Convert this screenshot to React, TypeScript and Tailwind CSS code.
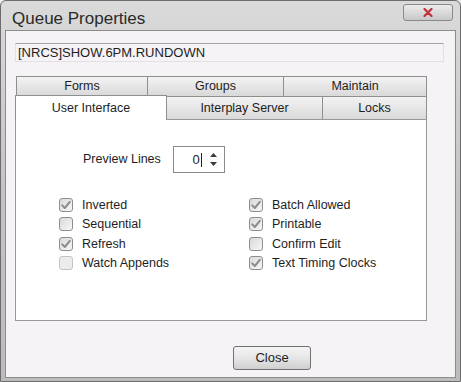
import React from 'react';

const Check: React.FC<{ checked?: boolean; disabled?: boolean; label: string }> = ({ checked, disabled, label }) => (
  <div className="h-[19.5px] flex items-center">
    <div
      className={`w-[14px] h-[14px] rounded-[3px] border flex items-center justify-center ${
        disabled ? 'border-[#c4c4c4] bg-[#ececec]' : 'border-[#8e8e8e] bg-gradient-to-br from-[#d9d9d9] to-[#f7f7f7]'
      }`}
    >
      {checked && (
        <svg width="12" height="12" viewBox="0 0 12 12">
          <path d="M2.2 6.4 L4.8 9 L9.8 2.8" fill="none" stroke="#8c8c8c" strokeWidth="2" strokeLinecap="round" strokeLinejoin="round" />
        </svg>
      )}
    </div>
    <span className="ml-[9px] text-[12.5px] text-[#1e1e1e] leading-none">{label}</span>
  </div>
);

const tabBack = 'h-[20px] border border-[#8f8f8f] border-b-0 -ml-px first:ml-0 bg-gradient-to-b from-[#f3f3f3] to-[#d9d9d9] flex items-center justify-center text-[12.5px] text-[#1e1e1e]';
const tabFront = 'h-[23px] border border-[#8f8f8f] border-b-0 -ml-px bg-gradient-to-b from-[#f3f3f3] to-[#d9d9d9] flex items-center justify-center text-[12.5px] text-[#1e1e1e]';

export default function App() {
  return (
    <div className="w-[461px] h-[382px] bg-[#ececec] font-['Liberation_Sans',Arial,sans-serif]">
      <div className="w-full h-full rounded-t-[6px] border border-[#6c6c6c] bg-gradient-to-b from-[#dadada] via-[#c4c4c4] to-[#bcbcbc] flex flex-col px-[4px] pb-[3px]">
        {/* title bar */}
        <div className="h-[29px] flex items-start justify-between shrink-0">
          <span className="mt-[5px] ml-[7px] text-[17px] text-[#2a2a2a]">Queue Properties</span>
          <div className="mt-[3px] mr-[3px] w-[50px] h-[17px] rounded-[3px] border border-[#8a8a8a] bg-gradient-to-b from-[#ececec] to-[#c8c8c8] flex items-center justify-center">
            <svg width="10" height="9" viewBox="0 0 10 9">
              <path d="M1.5 1 L8.5 8 M8.5 1 L1.5 8" stroke="#c0323a" strokeWidth="2.2" strokeLinecap="round" />
            </svg>
          </div>
        </div>

        {/* client area */}
        <div className="flex-1 bg-[#f6f3f6] border border-[#8c8c8c] flex flex-col">
          <div className="ml-[9px] mt-[12px] w-[429px] h-[19px] border border-[#e3e0e3] border-t-[#a6a6a6] flex items-center pl-[2px] text-[13px] text-[#1e1e1e]">
            [NRCS]SHOW.6PM.RUNDOWN
          </div>

          <div className="ml-[9px] mt-[14px] flex flex-col">
            <div className="flex ml-[1px]">
              <div className={`${tabBack} w-[132px]`}>Forms</div>
              <div className={`${tabBack} w-[137px]`}>Groups</div>
              <div className={`${tabBack} w-[144px]`}>Maintain</div>
            </div>
            <div className="flex items-end">
              <div className="relative z-10 h-[25px] w-[152px] -mt-[2px] -mb-px border border-[#8f8f8f] border-b-0 bg-white flex items-start justify-center pt-[3px] text-[12.5px] text-[#1e1e1e]">
                User Interface
              </div>
              <div className={`${tabFront} w-[157px]`}>Interplay Server</div>
              <div className={`${tabFront} w-[105px]`}>Locks</div>
            </div>
            <div className="w-[412px] h-[202px] border border-[#989898] bg-white flex flex-col">
              <div className="mt-[26px] ml-[67px] flex items-center">
                <span className="text-[12.5px] text-[#1e1e1e]">Preview Lines</span>
                <div className="ml-[12px] w-[52px] h-[27px] border border-[#8a8a8a] bg-white flex items-center">
                  <span className="ml-auto text-[13px] text-[#1e1e1e] leading-none">0</span>
                  <span className="w-px h-[14px] bg-[#1e1e1e] ml-[1px]" />
                  <div className="ml-[6px] mr-[4px] w-[12px] flex flex-col items-center gap-[5px]">
                    <svg width="7" height="4" viewBox="0 0 7 4"><path d="M0 4 L3.5 0 L7 4 Z" fill="#3a3a3a" /></svg>
                    <svg width="7" height="4" viewBox="0 0 7 4"><path d="M0 0 L3.5 4 L7 0 Z" fill="#3a3a3a" /></svg>
                  </div>
                </div>
              </div>

              <div className="mt-[22px] flex">
                <div className="ml-[43px] w-[190px] flex flex-col">
                  <Check checked label="Inverted" />
                  <Check label="Sequential" />
                  <Check checked label="Refresh" />
                  <Check disabled label="Watch Appends" />
                </div>
                <div className="flex flex-col">
                  <Check checked label="Batch Allowed" />
                  <Check checked label="Printable" />
                  <Check label="Confirm Edit" />
                  <Check checked label="Text Timing Clocks" />
                </div>
              </div>
            </div>
          </div>

          <div className="mt-[25px] ml-[227px] w-[78px] h-[24px] rounded-[3px] border border-[#707070] bg-gradient-to-b from-[#f4f4f4] via-[#e6e6e6] to-[#cfcfcf] flex items-center justify-center text-[13px] text-[#1e1e1e]">
            Close
          </div>
        </div>
      </div>
    </div>
  );
}
